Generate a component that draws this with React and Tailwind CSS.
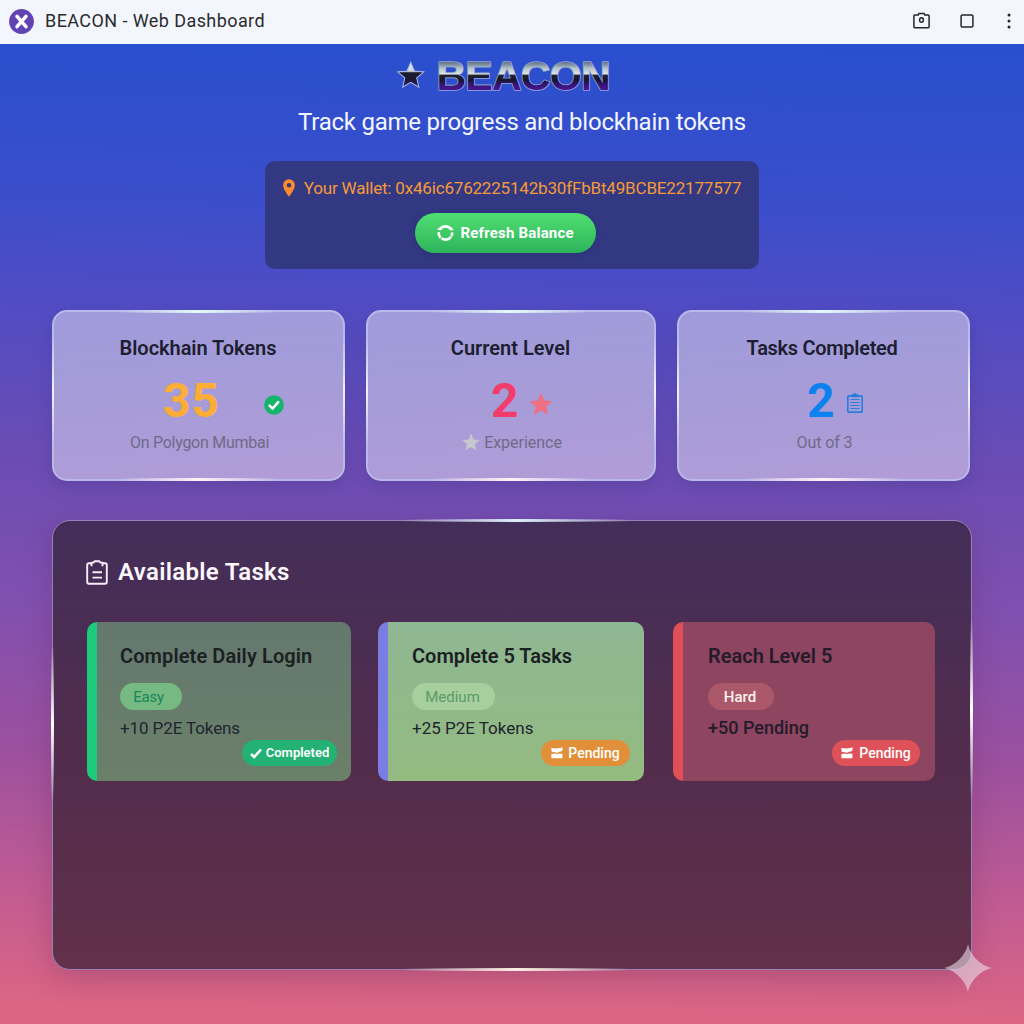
import React from "react";

const STAR = "M12 0.8l3.3 7.7 8.3.7-6.3 5.5 1.9 8.2L12 18.6l-7.2 4.3 1.9-8.2L.4 9.2l8.3-.7z";

function Star({ className }) {
  return (
    <svg viewBox="0 0 24 24" className={className} fill="currentColor">
      <path d={STAR} />
    </svg>
  );
}

function TitleBar() {
  return (
    <header className="flex h-11 items-center bg-[#f3f6fc] pl-[9px] text-[#2b2b2d]">
      <svg viewBox="0 0 25 25" className="mt-[-2px] h-[25px] w-[25px]">
        <circle cx="12.5" cy="12.5" r="12.4" fill="#6144b4" />
        <path d="M8 7.4L17 17.6M17 7.4L8 17.6" stroke="#fff" strokeWidth="3.5" strokeLinecap="round" />
      </svg>
      <span className="mt-[-3px] ml-[11px] text-[18px] leading-6 tracking-[0.42px] whitespace-nowrap">BEACON - Web Dashboard</span>
      <svg viewBox="0 0 17 17" className="mt-[-3px] ml-auto h-[17px] w-[17px]" fill="none" stroke="#252527" strokeWidth="1.5">
        <path d="M1.8 3h3.4l.7-1.6h5.2l.7 1.6h3.4q.9 0 .9.9v10.9q0 .9-.9.9H1.8q-.9 0-.9-.9V3.900q0-.9.9-.9z" />
        <ellipse cx="8.500" cy="8" rx="1.900" ry="2.300" />
      </svg>
      <svg viewBox="0 0 14 14" className="mt-[-3px] ml-[30px] h-[14px] w-[14px]" fill="none" stroke="#252527" strokeWidth="1.500">
        <rect x="1.100" y="0.900" width="11.800" height="12.200" rx="1.300" />
      </svg>
      <svg viewBox="0 0 4 16" className="mt-[-3px] mr-[13px] ml-[33px] h-4 w-1" fill="#252527">
        <circle cx="2" cy="2" r="1.500" />
        <circle cx="2" cy="8" r="1.500" />
        <circle cx="2" cy="14" r="1.500" />
      </svg>
    </header>
  );
}

function Logo() {
  return (
    <svg viewBox="0 0 216 40" className="ml-[397px] block h-10 w-[216px] overflow-visible">
      <defs>
        <linearGradient id="chrome" gradientUnits="userSpaceOnUse" x1="0" y1="5" x2="0" y2="35">
          <stop offset="0" stopColor="#55637f" />
          <stop offset="0.14" stopColor="#8797a8" />
          <stop offset="0.25" stopColor="#b8c5cc" />
          <stop offset="0.43" stopColor="#dce3e4" />
          <stop offset="0.48" stopColor="#20222f" />
          <stop offset="0.64" stopColor="#17152e" />
          <stop offset="0.76" stopColor="#33136c" />
          <stop offset="1" stopColor="#4d17a0" />
        </linearGradient>
        <linearGradient id="chromeStar" x1="0" y1="0" x2="0" y2="1">
          <stop offset="0" stopColor="#e8ecec" />
          <stop offset="0.36" stopColor="#cfd6da" />
          <stop offset="0.42" stopColor="#1c1c2c" />
          <stop offset="0.7" stopColor="#1b1730" />
          <stop offset="1" stopColor="#35206a" />
        </linearGradient>
      </defs>
      <g transform="translate(0.300 5.500) scale(1.120)">
        <path d={STAR} fill="url(#chromeStar)" stroke="#a8bce8" strokeWidth="0.900" />
      </g>
      <g fontFamily="Liberation Sans, Arial, sans-serif" fontWeight="700" fontSize="41">
        <text x="39.500" y="34.300" textLength="174" fill="url(#chrome)" stroke="#93a6d0" strokeWidth="1.700" strokeLinejoin="round" paintOrder="stroke">
          BEACON
        </text>
      </g>
    </svg>
  );
}

function Wallet() {
  return (
    <section className="mx-auto mt-[25px] flex h-[108px] w-[494px] flex-col items-center rounded-[10px] bg-[#333883]">
      <div className="mt-4 flex h-[22px] items-center">
        <svg viewBox="0 0 12 18" className="h-[18px] w-3">
          <path fillRule="evenodd" d="M6 .3a5.900 5.900 0 0 0-5.900 6C.1 10.500 6 17.700 6 17.700s5.900-7.200 5.900-11.400a5.900 5.900 0 0 0-5.900-6zm0 3.600a2.300 2.300 0 1 1 0 4.600 2.300 2.300 0 0 1 0-4.600z" fill="#fb8b2c" />
        </svg>
        <span className="ml-[9px] text-[17px] leading-[22px] tracking-[-0.18px] whitespace-nowrap text-[#f59a35]">
          Your Wallet: <span>0x46ic6762225142b30fFbBt49BCBE22177577</span>
        </span>
      </div>
      <button className="mt-[14px] ml-[-14px] flex h-10 w-[181px] items-center rounded-full bg-linear-to-b from-[#50de70] to-[#2db45c] pl-[22px] text-white shadow-[0_1px_6px_#1c255c55]">
        <svg viewBox="0 0 17 18" className="h-[18px] w-[17px]" fill="none" stroke="#fff" strokeWidth="2.600">
          <path d="M3 5.200A6.700 6.700 0 0 1 14 5.200M14 12.800A6.700 6.700 0 0 1 4.500 14.300M1.800 8.200A6.700 6.700 0 0 0 3.700 13.800M15.200 8.500A6.700 6.700 0 0 1 14.300 12" />
          <path d="M.2 5.800l2-2.600 2.300 3zM16.800 6l-4.200.6 1.700-3.600z" fill="#fff" stroke="none" />
        </svg>
        <span className="ml-[7px] text-[15px] leading-5 font-bold tracking-[0.2px] whitespace-nowrap">Refresh Balance</span>
      </button>
    </section>
  );
}

function Glow() {
  return (
    <>
      <i className="absolute -top-[2px] left-[22%] h-[3px] w-[56%] rounded-full bg-linear-to-r from-transparent via-[#e4fbff] to-transparent" />
      <i className="absolute -bottom-[2px] left-[22%] h-[3px] w-[56%] rounded-full bg-linear-to-r from-transparent via-[#fff3f6] to-transparent" />
      <i className="absolute top-[15%] -left-[2px] h-[65%] w-[2px] bg-linear-to-b from-transparent via-[#eef3ff] to-transparent" />
      <i className="absolute top-[15%] -right-[2px] h-[65%] w-[2px] bg-linear-to-b from-transparent via-[#eef3ff] to-transparent" />
    </>
  );
}

function StatCard({ title, children, sub, titleClass }) {
  return (
    <article className="relative flex h-[171px] flex-col items-center rounded-[15px] border-2 border-[#bab8ea] bg-linear-[175deg,#a09bdc_0%,#a69cd8_50%,#b19cd7_100%] pt-6 shadow-[0_6px_16px_#39308044]">
      <Glow />
      <h2 className={"text-[20px] leading-6 font-semibold whitespace-nowrap text-[#1d1e30] " + titleClass}>{title}</h2>
      <div className="mt-3 flex h-[58px] w-full items-center">{children}</div>
      <div className="mt-[3px] flex h-5 items-center text-[16px] leading-5 tracking-[-0.27px] whitespace-nowrap text-[#706a88]">{sub}</div>
    </article>
  );
}

function Stats() {
  return (
    <section className="mt-[41px] ml-[52px] grid grid-cols-[293px_290px_293px] gap-[21px]">
      <StatCard title="Blockhain Tokens" titleClass="mr-px tracking-[-0.05px]" sub={<span className="ml-[2px]">On Polygon Mumbai</span>}>
        <span className="ml-[109px] text-[48px] leading-[58px] font-bold tracking-[0.6px] text-[#fcad35]">35</span>
        <svg viewBox="0 0 20 20" className="mt-[7px] ml-[45px] h-5 w-5">
          <circle cx="10" cy="10" r="9.800" fill="#13b56b" />
          <path d="M5.600 10.600l3 2.900 5.600-6.300" stroke="#fff" strokeWidth="2.600" strokeLinecap="round" strokeLinejoin="round" fill="none" />
        </svg>
      </StatCard>
      <StatCard
        title="Current Level"
        titleClass="mr-px"
        sub={
          <>
            <Star className="mt-[-2px] mr-1 ml-[2px] h-[18px] w-[18px] text-[#c5c8cf]" />
            <span className="tracking-[-0.03px]">Experience</span>
          </>
        }
      >
        <span className="ml-[123px] text-[48px] leading-[58px] font-bold text-[#f23c6c]">2</span>
        <Star className="mt-[5px] ml-[10px] h-6 w-6 text-[#ee7082]" />
      </StatCard>
      <StatCard title="Tasks Completed" titleClass="tracking-[-0.3px] mr-[3px]" sub={<span className="ml-[2px] tracking-[-0.1px]">Out of 3</span>}>
        <span className="ml-[128px] text-[48px] leading-[58px] font-bold text-[#0b82ed]">2</span>
        <svg viewBox="0 0 16 20" className="mt-[4px] ml-[12px] h-5 w-4" fill="none" stroke="#287ddd">
          <rect x="0.800" y="2.800" width="14.400" height="16.400" rx="1.200" strokeWidth="1.700" />
          <path d="M4.600 1.300h1.800L7 .3h2l.6 1h1.800v2.900H4.600z" fill="#287ddd" stroke="none" />
          <path d="M3.500 6.500h9M3.500 9.500h9M3.500 12.500h9M3.500 15.500h9" strokeWidth="1.200" />
        </svg>
      </StatCard>
    </section>
  );
}

function PendingIcon() {
  return (
    <svg viewBox="0 0 12 12" className="h-3 w-3" fill="currentColor">
      <path d="M.2.900l5.500.5L11.800.500l-.6 3.600-3.700 1-1.500.8-1.300-.7L.8 5zM.4 7l3.800-.5 1.800.8 2-.8 3.400.2v4.600H.4z" />
    </svg>
  );
}

function TaskCard({ title, level, reward, status, icon, c }) {
  return (
    <article className={"relative h-[159px] rounded-[10px] border-l-[10px] pt-[22px] whitespace-nowrap " + c.card}>
      <h3 className={"text-[20px] leading-6 font-semibold " + c.title}>{title}</h3>
      <div className={"mt-[15px] flex h-[27px] items-center justify-center rounded-full text-[15px] leading-5 " + c.level}>{level}</div>
      <p className={"mt-[8px] leading-5 " + c.reward}>{reward}</p>
      <div className={"absolute bottom-[15px] flex h-[26px] items-center justify-center rounded-full leading-5 text-white " + c.status}>
        {icon}
        <span>{status}</span>
      </div>
    </article>
  );
}

function Tasks() {
  return (
    <section className="relative mt-[39px] ml-[52px] h-[450px] w-[920px] rounded-[18px] border border-[#9a80bb] bg-linear-to-b from-[#432e59] via-[#512c4d] to-[#623049] pt-[38px] shadow-[0_8px_28px_#50204040]">
      <i className="absolute -top-[2px] left-[38%] h-[3px] w-[25%] bg-linear-to-r from-transparent via-[#dceef8] to-transparent" />
      <i className="absolute -bottom-[2px] left-[38%] h-[3px] w-[25%] bg-linear-to-r from-transparent via-[#fff0e2] to-transparent" />
      <i className="absolute top-[28%] -left-[2px] h-[35%] w-[3px] bg-linear-to-b from-transparent via-white to-transparent" />
      <i className="absolute top-[22%] -right-[2px] h-[40%] w-[3px] bg-linear-to-b from-transparent via-white to-transparent" />
      <div className="ml-[33px] flex h-[26px] items-center">
        <svg viewBox="0 0 22 25" className="h-[25px] w-[22px]" fill="none" stroke="#f6eef9" strokeWidth="1.900" strokeLinejoin="round">
          <path d="M5.500 3.300H3q-1.800 0-1.800 1.800v16.700q0 1.900 1.800 1.900h16q1.800 0 1.800-1.900V5.100q0-1.800-1.800-1.800h-2.500" />
          <path d="M5.500 6.200V2.600h2.200l.9-1.400h4.800l.9 1.400h2.200v3.600" />
          <path d="M6.500 12.300h9.500M6.500 17.600h9.500" />
        </svg>
        <h2 className="ml-[10px] text-[24px] leading-[26px] font-semibold tracking-[0.32px] whitespace-nowrap text-[#fcf7ff]">Available Tasks</h2>
      </div>
      <div className="mt-[37px] ml-[34px] flex">
        <TaskCard
          title="Complete Daily Login"
          level="Easy"
          reward="+10 P2E Tokens"
          status="Completed"
          icon={
            <svg viewBox="0 0 12 11" className="h-[11px] w-3" fill="none" stroke="currentColor" strokeWidth="2.600">
              <path d="M1 6l3.200 3L11 1.500" />
            </svg>
          }
          c={{
            card: "w-[264px] border-[#1bca7a] bg-linear-to-b from-[#64786f] to-[#6b8069] pl-[23px]",
            title: "text-[#1b2023] tracking-[0.1px]",
            level: "w-[62px] bg-[#76b982] pr-[5px] tracking-[-0.2px] text-[#16885b]",
            reward: "text-[17px] tracking-[-0.1px] text-[#20242e]",
            status: "right-[14px] w-[95px] bg-[#24b274] gap-1 text-[13px] font-semibold",
          }}
        />
        <TaskCard
          title="Complete 5 Tasks"
          level="Medium"
          reward="+25 P2E Tokens"
          status="Pending"
          icon={<PendingIcon />}
          c={{
            card: "ml-[27px] w-[266px] border-[#7a7de2] bg-linear-to-b from-[#8eb793] to-[#94bb80] pl-[24px]",
            title: "text-[#1b2023]",
            level: "w-[83px] bg-[#a6cf9d] pr-[2px] text-[#5c9a68]",
            reward: "text-[17px] text-[#20242e]",
            status: "right-[14px] w-[89px] bg-[#e28f39] gap-[5px] text-[14px] font-medium",
          }}
        />
        <TaskCard
          title="Reach Level 5"
          level="Hard"
          reward="+50 Pending"
          status="Pending"
          icon={<PendingIcon />}
          c={{
            card: "ml-[29px] w-[262px] border-[#e04e57] bg-[#8d4560] pl-[25px]",
            title: "text-[#241b2a]",
            level: "w-[66px] bg-[#ac586b] pr-[2px] font-medium text-[#fff4f1]",
            reward: "text-[18px] font-medium text-[#241b2a]",
            status: "right-[15px] w-[88px] bg-[#df5159] gap-[6px] text-[14px] font-medium",
          }}
        />
      </div>
    </section>
  );
}

export default function App() {
  return (
    <div className="relative h-[1024px] w-[1024px] overflow-hidden font-[Roboto,sans-serif]">
      <TitleBar />
      <main className="h-[980px] bg-linear-[181deg,#284fcf_0%,#3b4eca_17%,#504cc4_27%,#6b4cb3_43%,#8050b0_57%,#9b509f_72%,#c05b93_86%,#dc6584_98%] pt-3">
        <Logo />
        <p className="mt-[13px] pl-5 text-center text-[24px] leading-[27px] tracking-[-0.24px] whitespace-nowrap text-[#f3f5ff]">Track game progress and blockhain tokens</p>
        <Wallet />
        <Stats />
        <Tasks />
      </main>
      <svg viewBox="0 0 48 48" className="absolute top-[944px] left-[944px] h-12 w-12">
        <path d="M24 0C26 11 37 22 48 24C37 26 26 37 24 48C22 37 11 26 0 24C11 22 22 11 24 0z" fill="#e9dce6" fillOpacity="0.600" />
      </svg>
    </div>
  );
}
